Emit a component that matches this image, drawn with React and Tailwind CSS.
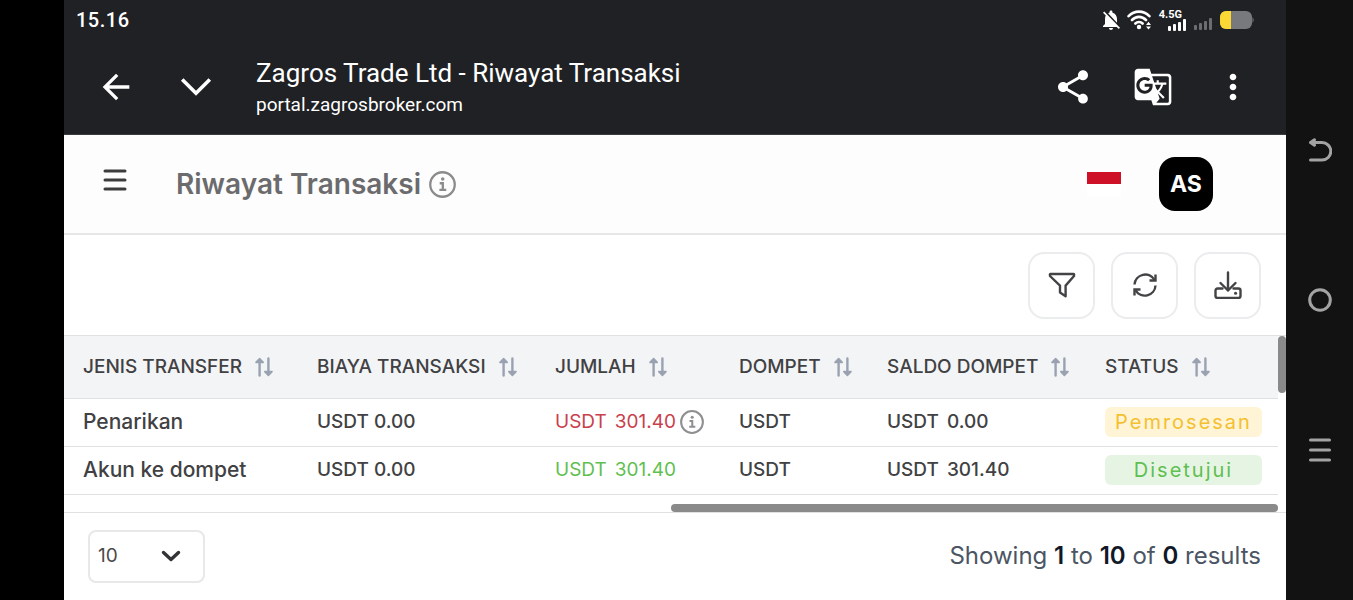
import React from "react";
import { MdArrowBack, MdShare, MdGTranslate, MdMoreVert, MdNotificationsOff } from "react-icons/md";

const columns = [
  { label: "JENIS TRANSFER", width: "w-[234px]" },
  { label: "BIAYA TRANSAKSI", width: "w-[238px]" },
  { label: "JUMLAH", width: "w-[184px]" },
  { label: "DOMPET", width: "w-[148px]" },
  { label: "SALDO DOMPET", width: "w-[218px]" },
  { label: "STATUS", width: "" },
];

const rows = [
  {
    type: "Penarikan",
    fee: "USDT 0.00",
    amount: "301.40",
    amountClass: "text-[#c9404d]",
    info: true,
    wallet: "USDT",
    balance: "0.00",
    status: "Pemrosesan",
    statusClass: "bg-[#fff4d6] text-[#f4c02f]",
  },
  {
    type: "Akun ke dompet",
    fee: "USDT 0.00",
    amount: "301.40",
    amountClass: "text-[#5fbf50]",
    info: false,
    wallet: "USDT",
    balance: "301.40",
    status: "Disetujui",
    statusClass: "bg-[#e6f5e3] text-[#5fbf50]",
  },
];

function InfoIcon({ className }) {
  return (
    <svg viewBox="0 0 26 26" fill="none" stroke="currentColor" className={className} aria-hidden="true">
      <circle cx="13" cy="13" r="11.8" strokeWidth="2.2" />
      <path d="M10.3 11.8h3v6M10 18.2h6.6" strokeWidth="2.2" />
      <circle cx="13.2" cy="7.8" r="1.7" fill="currentColor" stroke="none" />
    </svg>
  );
}

function SortIcon() {
  return (
    <svg viewBox="0 0 20 20" className="w-5 h-5 shrink-0 text-[#9aa2b1]" fill="none" stroke="currentColor" strokeWidth="2.4" strokeLinecap="round" aria-hidden="true">
      <path d="M5.6 3v15.5M14.4 1.5V17" />
      <path d="M5.6 1.6 2 5.4h7.2zM14.4 18.4 10.8 14.6H18z" fill="currentColor" strokeWidth="1.6" strokeLinejoin="round" />
    </svg>
  );
}

function WifiIcon() {
  return (
    <svg viewBox="0 0 24 20" className="w-6 h-5" fill="none" stroke="currentColor" strokeWidth="2.6" strokeLinecap="round" aria-hidden="true">
      <path d="M1.6 6.2C7.5.1 16.5.1 22.4 6.2M5 10c4-4.200 10-4.200 14 0M8.400 13.500c2-2.100 5.200-2.100 7.200 0" />
      <circle cx="12" cy="17" r="2.2" fill="currentColor" stroke="none" />
      <path d="M19 15 21.500 11.800 24 15zM19 16.400 21.500 19.600 24 16.400z" fill="currentColor" stroke="none" />
    </svg>
  );
}

function SignalBars({ className }) {
  return (
    <svg viewBox="0 0 18 12" className={className} fill="currentColor" aria-hidden="true">
      <rect x="0" y="7" width="3" height="5" rx="1" />
      <rect x="5" y="5" width="3" height="7" rx="1" />
      <rect x="10" y="3" width="3" height="9" rx="1" />
      <rect x="15" y="0" width="3" height="12" rx="1" />
    </svg>
  );
}

function StatusBar() {
  return (
    <div className="flex items-center justify-between h-10 pl-3 pr-8 font-['Roboto',sans-serif]">
      <span className="text-[20px] font-medium leading-6 tracking-wide">15.16</span>
      <div className="flex items-center">
        <MdNotificationsOff className="w-6 h-6 mr-1" />
        <WifiIcon />
        <div className="flex flex-col items-end ml-2 mr-2">
          <span className="text-[11px] leading-[9px] font-bold pr-1">4.5G</span>
          <SignalBars className="w-[18px] h-3" />
        </div>
        <SignalBars className="w-[18px] h-3 mt-2 mr-2 text-[#6b6d70]" />
        <svg viewBox="0 0 34 18" className="w-[34px] h-[18px]" aria-hidden="true">
          <path d="M6 0h20a6 6 0 0 1 6 6v6a6 6 0 0 1-6 6H6a6 6 0 0 1-6-6V6a6 6 0 0 1 6-6z" fill="#77797c" />
          <path d="M11 0H6a6 6 0 0 0-6 6v6a6 6 0 0 0 6 6h5z" fill="#fdd835" />
          <path d="M32.500 6.500c1.500.500 1.500 4.500 0 5z" fill="#77797c" />
        </svg>
      </div>
    </div>
  );
}

function BrowserBar() {
  return (
    <div className="flex items-center h-[94px] pl-8 pr-[33px]">
      <button type="button" aria-label="Kembali" className="mr-11">
        <MdArrowBack className="w-10 h-10" />
      </button>
      <button type="button" aria-label="Tutup" className="mr-11">
        <svg viewBox="0 0 32 20" className="w-8 h-5" fill="none" stroke="currentColor" strokeWidth="3.600" aria-hidden="true">
          <path d="M2.200 2.500 16 16.300 29.800 2.500" />
        </svg>
      </button>
      <div className="flex-1 pt-1 font-['Roboto',sans-serif]">
        <p className="text-[26px] leading-8">Zagros Trade Ltd - Riwayat Transaksi</p>
        <p className="text-[19px] leading-8">portal.zagrosbroker.com</p>
      </div>
      <div className="flex items-center gap-10">
        <button type="button" aria-label="Bagikan">
          <MdShare className="w-10 h-10" />
        </button>
        <button type="button" aria-label="Terjemahkan">
          <MdGTranslate className="w-10 h-10" />
        </button>
        <button type="button" aria-label="Menu lainnya">
          <MdMoreVert className="w-10 h-10" />
        </button>
      </div>
    </div>
  );
}

function PageHeader() {
  return (
    <header className="flex items-center h-[100px] pl-[39px] pr-[73px] bg-[#fdfdfd] border-b-2 border-[#e7e7e8]">
      <button type="button" aria-label="Buka menu" className="mr-[49px] pb-2">
        <svg viewBox="0 0 24 22" className="w-6 h-[22px] text-[#3c3c3e]" fill="none" stroke="currentColor" strokeWidth="3" strokeLinecap="round" aria-hidden="true">
          <path d="M2 2h20M2 11h20M2 20h20" />
        </svg>
      </button>
      <h1 className="text-[28px] font-semibold leading-8 text-[#6b6b6d]">Riwayat Transaksi</h1>
      <InfoIcon className="ml-2 w-[27px] h-[27px] text-[#8b8b8d]" />
      <div className="flex items-center ml-auto gap-[38px]">
        <div className="w-[34px] h-6 bg-white border-t-[12px] border-[#ce1126]" role="img" aria-label="Indonesia"></div>
        <button type="button" className="w-[54px] h-[54px] rounded-2xl bg-black text-white text-[23px] font-bold">
          AS
        </button>
      </div>
    </header>
  );
}

function ToolButton({ label, children }) {
  return (
    <button type="button" aria-label={label} className="flex items-center justify-center w-[67px] h-[67px] rounded-2xl border-2 border-[#ebeced] bg-white text-[#434345]">
      {children}
    </button>
  );
}

function Toolbar() {
  return (
    <div className="flex justify-end items-center gap-4 h-[100px] pr-[25px]">
      <ToolButton label="Filter">
        <svg viewBox="0 0 28 28" className="w-7 h-7" fill="none" stroke="currentColor" strokeWidth="2.400" strokeLinejoin="round" aria-hidden="true">
          <path d="M2.500 3h23c.6 0 .8.700.5 1.200v.8l-8.400 9.600v10.600l-5.600-3.600v-7L2 5v-.8C1.700 3.700 1.900 3 2.500 3z" />
        </svg>
      </ToolButton>
      <ToolButton label="Muat ulang">
        <svg viewBox="0 0 28 28" className="w-7 h-7" fill="none" stroke="currentColor" strokeWidth="2.400" aria-hidden="true">
          <path d="M3.500 13.500A10.700 10.700 0 0 1 23.500 9M24.500 14.500A10.700 10.700 0 0 1 4.500 19.200" />
          <path d="M24.500 3.500v6h-6M3.500 24.500v-6h6" />
        </svg>
      </ToolButton>
      <ToolButton label="Unduh">
        <svg viewBox="0 0 28 28" className="w-7 h-7" fill="none" stroke="currentColor" strokeWidth="2.400" strokeLinecap="round" strokeLinejoin="round" aria-hidden="true">
          <path d="M14 1.500v18M6.500 12l7.500 7.500 7.500-7.500" />
          <path d="M8.500 17.500H3.500a2 2 0 0 0-2 2V25a2 2 0 0 0 2 2h21a2 2 0 0 0 2-2v-5.500a2 2 0 0 0-2-2h-5" />
          <path d="M21.500 22.300h.1" strokeWidth="3" />
        </svg>
      </ToolButton>
    </div>
  );
}

function TransactionTable() {
  return (
    <div className="border-y border-[#dfe1e3]">
      <div className="flex">
        <table className="flex-1 table-fixed border-collapse text-left text-[19px] leading-6 whitespace-nowrap text-[#414143]">
          <thead className="bg-[#f3f4f6]">
            <tr className="h-[62px] border-b border-[#dfe1e3]">
              {columns.map((col) => (
                <th key={col.label} scope="col" className={`${col.width} pl-[19px] font-medium`}>
                  <button type="button" className="flex items-center gap-3">
                    {col.label}
                    <SortIcon />
                  </button>
                </th>
              ))}
            </tr>
          </thead>
          <tbody className="font-medium">
            {rows.map((row) => (
              <tr key={row.type} className="h-12 border-b border-[#dfe1e3]">
                <td className="pl-[19px] text-[21px]">{row.type}</td>
                <td className="pl-[19px]">{row.fee}</td>
                <td className="pl-[19px]">
                  <div className={`flex items-center font-normal ${row.amountClass}`}>
                    <span className="mr-2">USDT</span>
                    <span>{row.amount}</span>
                    {row.info && <InfoIcon className="ml-1 w-6 h-6 text-[#8f8f91]" />}
                  </div>
                </td>
                <td className="pl-[19px]">{row.wallet}</td>
                <td className="pl-[19px]">
                  <span className="mr-2">USDT</span>
                  {row.balance}
                </td>
                <td className="pl-[19px] pr-4">
                  <span className={`block h-[30px] leading-[30px] rounded-md text-center text-[20px] font-normal tracking-widest ${row.statusClass}`}>
                    {row.status}
                  </span>
                </td>
              </tr>
            ))}
          </tbody>
        </table>
        <div className="w-2">
          <div className="h-[57px] rounded-full bg-[#8a8a8a]"></div>
        </div>
      </div>
      <div className="flex justify-end items-end h-[17px] pr-2">
        <div className="w-1/2 h-2 rounded-full bg-[#8a8a8a]"></div>
      </div>
    </div>
  );
}

function Pagination() {
  return (
    <footer className="flex items-center justify-between h-[87px] pl-6 pr-[25px]">
      <div className="relative">
        <select aria-label="Jumlah baris" defaultValue="10" className="appearance-none w-[117px] h-[53px] pl-2 rounded-lg border-2 border-[#e8e8e9] bg-white text-[19px] text-[#4a4a4c]">
          <option>10</option>
          <option>25</option>
          <option>50</option>
        </select>
        <svg viewBox="0 0 20 12" className="absolute right-6 top-5 w-5 h-3 pointer-events-none text-[#343436]" fill="none" stroke="currentColor" strokeWidth="3.400" strokeLinecap="round" strokeLinejoin="round" aria-hidden="true">
          <path d="M2.500 2.500 10 9.500l7.500-7" />
        </svg>
      </div>
      <p className="text-[24px] leading-8 text-[#4b5563]">
        Showing <b className="font-semibold text-[#111827]">1</b> to <b className="font-semibold text-[#111827]">10</b> of{" "}
        <b className="font-semibold text-[#111827]">0</b> results
      </p>
    </footer>
  );
}

function SystemNav() {
  return (
    <nav className="flex flex-col items-center justify-center gap-[126px] w-[67px] shrink-0 bg-[#121212] text-[#a3a3a3]">
      <button type="button" aria-label="Kembali">
        <svg viewBox="0 0 24 24" className="w-6 h-6" fill="none" stroke="currentColor" strokeWidth="3" strokeLinecap="round" strokeLinejoin="round" aria-hidden="true">
          <path d="M6.500 1.800 2.500 4.500 6.500 7.200M2.500 4.500H14a8.800 8.800 0 0 1 0 17.600H2.500" />
        </svg>
      </button>
      <button type="button" aria-label="Beranda">
        <svg viewBox="0 0 24 24" className="w-6 h-6" fill="none" stroke="currentColor" strokeWidth="3" aria-hidden="true">
          <circle cx="12" cy="12" r="10.300" />
        </svg>
      </button>
      <button type="button" aria-label="Aplikasi terbaru">
        <svg viewBox="0 0 24 24" className="w-6 h-6" fill="none" stroke="currentColor" strokeWidth="3" strokeLinecap="round" aria-hidden="true">
          <path d="M2.500 2h19M2.500 12h19M2.500 22h19" />
        </svg>
      </button>
    </nav>
  );
}

export default function App() {
  return (
    <div className="flex min-h-screen bg-black font-['Inter',sans-serif]">
      <div className="w-16 shrink-0"></div>
      <main className="flex-1 min-w-0 bg-white">
        <div className="bg-[#202124] text-white border-b border-[#3a3b3e]">
          <StatusBar />
          <BrowserBar />
        </div>
        <PageHeader />
        <Toolbar />
        <TransactionTable />
        <Pagination />
      </main>
      <SystemNav />
    </div>
  );
}
